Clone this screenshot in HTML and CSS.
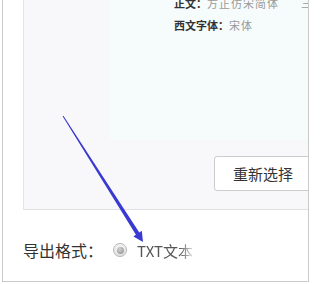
FILE: index.html
```html
<!DOCTYPE html>
<html lang="zh">
<head>
<meta charset="utf-8">
<link rel="stylesheet" href="styles.css">
</head>
<body>
<div class="frame">
  <div class="outer">
    <div class="panel">
      <div class="paper">
        <div class="lines">
          <div class="line"><span class="lbl">正文：</span><span class="val">方正仿宋简体</span><span class="val more">三</span></div>
          <div class="line"><span class="lbl">西文字体：</span><span class="val">宋体</span></div>
        </div>
      </div>
      <div class="btn-row"><button class="btn">重新选择</button></div>
    </div>
    <div class="format-row">
      <span class="format-label">导出格式：</span>
      <span class="radio"><span class="dot"></span></span>
      <span class="format-value">TXT文本</span>
    </div>
  </div>
  <svg class="arrow" width="309" height="284" viewBox="0 0 309 284">
    <polygon points="63.4,115.7 139.3,232.4 141.8,230.8 143,242 133.4,236.4 135.9,234.8 62.6,116.3" fill="#3a3ad2"/>
  </svg>
</div>
</body>
</html>
```

FILE: styles.css
```css
html, body {
  margin: 0;
  padding: 0;
  background: #fff;
}
body {
  font-family: "Noto Sans CJK SC", "Noto Sans", sans-serif;
}
.frame {
  position: relative;
  width: 309px;
  height: 284px;
  overflow: hidden;
}
.outer {
  display: flow-root;
  box-sizing: border-box;
  margin-left: 2px;
  width: 307px;
  height: 282px;
  border: 1px solid #cacaca;
  border-top: none;
  padding-left: 20px;
}
.panel {
  display: flow-root;
  background: #f8f8fa;
  border-left: 1px solid #e4e4e6;
  border-bottom: 1px solid #e1e1e3;
  padding-bottom: 18px;
  overflow: hidden;
}
.paper {
  display: flow-root;
  margin-left: 86px;
  margin-right: 1px;
  height: 140px;
  background: #f6fbfc;
}
.lines {
  margin-top: -8px;
  padding-left: 64px;
  white-space: nowrap;
}
.line {
  height: 22px;
  line-height: 22px;
  font-size: 11px;
}
.lbl {
  color: #333;
  font-weight: bold;
}
.val {
  color: #9a9a9a;
  letter-spacing: 1px;
}
.more {
  margin-left: 22px;
}
.btn-row {
  margin-top: 16px;
  padding-left: 190px;
  white-space: nowrap;
}
.btn {
  box-sizing: border-box;
  width: 98px;
  height: 35px;
  border: 1px solid #cccccc;
  border-radius: 3px;
  background: #fff;
  color: #333;
  font-family: "Noto Sans CJK SC", sans-serif;
  font-size: 15px;
  padding: 0;
}
.format-row {
  display: flex;
  align-items: center;
  height: 26px;
  margin-top: 27px;
}
.format-label {
  font-size: 16px;
  color: #333;
}
.radio {
  box-sizing: border-box;
  display: flex;
  align-items: center;
  justify-content: center;
  width: 14px;
  height: 14px;
  margin-left: 10px;
  border-radius: 50%;
  border: 1px solid #b4b4b4;
  background: linear-gradient(#f4f4f4, #e2e2e2);
}
.dot {
  width: 7px;
  height: 7px;
  border-radius: 50%;
  background: radial-gradient(circle at 40% 35%, #d0d0d0, #8c8c8c);
}
.format-value {
  margin-left: 10px;
  font-size: 15px;
  color: #555;
  -webkit-mask-image: linear-gradient(to right, #000 75%, rgba(0,0,0,0.2));
  mask-image: linear-gradient(to right, #000 75%, rgba(0,0,0,0.2));
}
.arrow {
  position: absolute;
  left: 0;
  top: 0;
  pointer-events: none;
}
```
